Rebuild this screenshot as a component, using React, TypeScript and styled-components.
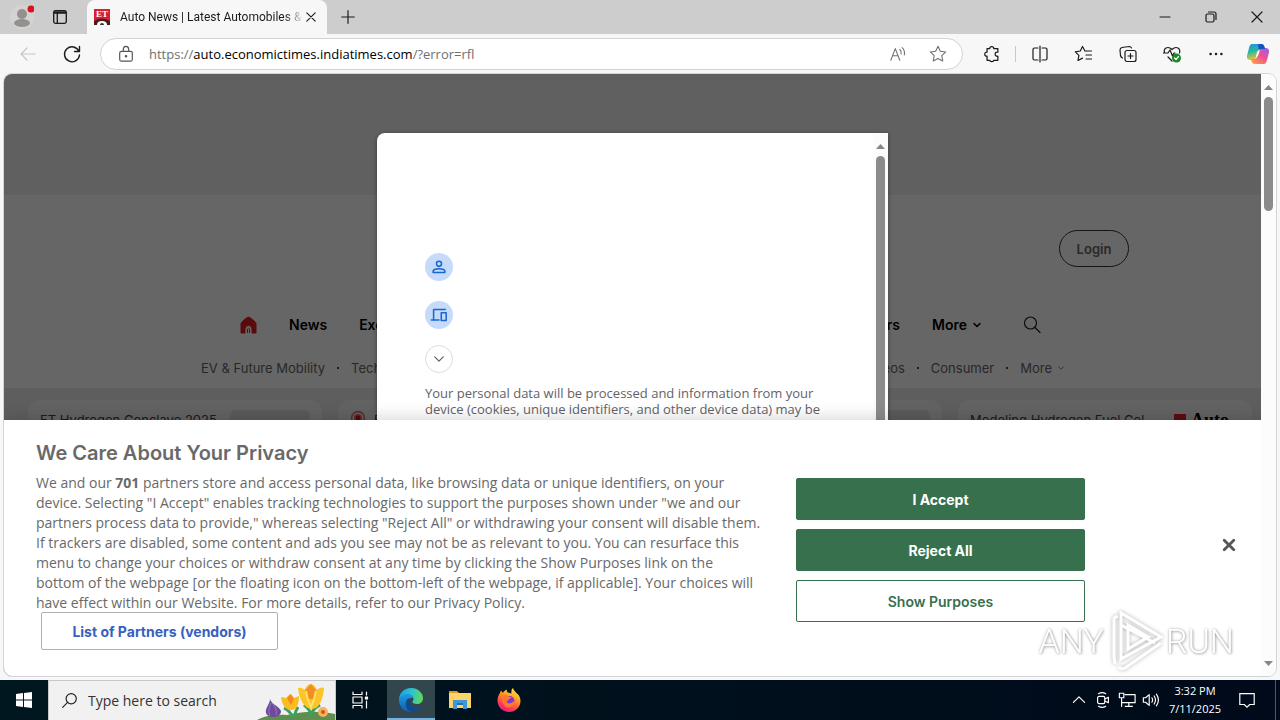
import React from 'react';
import styled, { createGlobalStyle } from 'styled-components';

const ui = `"Open Sans", "Noto Sans", sans-serif`;
const brand = `Inter, "Open Sans", sans-serif`;

const GlobalStyle = createGlobalStyle`
  * { box-sizing: border-box; }
  body { margin: 0; font-family: ${brand}; overflow: hidden; }
  button { font-family: inherit; padding: 0; border: 0; background: none; color: inherit; cursor: pointer; }
  p, h2, ul { margin: 0; padding: 0; }
  a { color: inherit; text-decoration: none; }
  svg { display: block; flex: none; }
`;

const Desktop = styled.div`
  height: 100vh;
  display: flex;
  flex-direction: column;
  background: #f5f7f8;
`;

/* Browser chrome */
const TitleBar = styled.header`
  height: 34px;
  flex: none;
  display: flex;
  background: #cdcdcd;
  font-family: ${ui};
`;
const TitleButton = styled.button<{ $w: number }>`
  width: ${p => p.$w}px;
  display: grid;
  place-items: center;
`;
const TitleLead = styled.div`
  display: flex;
  padding: 0 8px 0 3px;
`;
const Tab = styled.div`
  width: 240px;
  display: flex;
  align-items: center;
  padding: 0 8px 0 7px;
  background: #f7f7f7;
  border-radius: 8px 8px 0 0;
`;
const TabTitle = styled.span`
  flex: 1;
  margin-left: 10px;
  overflow: hidden;
  white-space: nowrap;
  font-family: Roboto, sans-serif;
  font-size: 12px;
  line-height: 20px;
  color: #1b1b1b;
  mask-image: linear-gradient(to right, #000 164px, transparent 184px);
`;
const TabClose = styled.button`
  width: 16px;
  height: 16px;
  display: grid;
  place-items: center;
`;
const WindowControls = styled.div`
  margin-left: auto;
  display: flex;
`;

const Toolbar = styled.div`
  height: 39px;
  flex: none;
  display: flex;
  align-items: center;
  padding: 0 2px 0 6px;
  background: #f7f7f7;
  font-family: ${ui};
`;
const ToolButton = styled.button<{ $w?: number }>`
  width: ${p => p.$w ?? 44}px;
  height: 32px;
  flex: none;
  display: grid;
  place-items: center;
`;
const AddressBar = styled.div`
  flex: 1;
  height: 32px;
  margin: 0 7px 0 6px;
  padding: 0 4px 0 16px;
  display: flex;
  align-items: center;
  gap: 14px;
  border: 1px solid #d2d2d2;
  border-radius: 16px;
  background: #fff;
`;
const Url = styled.div`
  flex: 1;
  font-size: 13px;
  line-height: 20px;
  color: #000;
`;
const Muted = styled.span`
  color: #707070;
`;
const AddressActions = styled.div`
  display: flex;
`;
const ToolDivider = styled.span`
  width: 1px;
  height: 16px;
  margin: 0 2px 0 1px;
  background: #c8c8c8;
`;

/* Page viewport */
const Frame = styled.main`
  flex: 1;
  min-height: 0;
  margin: 0 3px 3px;
  display: flex;
  overflow: hidden;
  border: 1px solid #d4d4d4;
  border-radius: 9px;
  background: #fff;
`;
const Viewport = styled.div`
  position: relative;
  flex: 1;
  overflow: hidden;
`;
const ScrollTrack = styled.div<{ $w: number }>`
  width: ${p => p.$w}px;
  flex: none;
  display: flex;
  flex-direction: column;
  align-items: center;
  padding: 10px 0 8px;
  gap: 5px;
  background: #fcfcfc;
`;
const ScrollThumb = styled.div<{ $share: string }>`
  width: 9px;
  height: ${p => p.$share};
  border-radius: 5px;
  background: #8b8b8b;
`;
const ScrollEnd = styled.div`
  margin-top: auto;
`;

const AdSlot = styled.div`
  height: 121px;
  background: #f0f0f0;
`;
const SiteHeader = styled.header`
  height: 193px;
  padding-top: 35px;
  background: #fff;
`;
const LoginRow = styled.div`
  display: flex;
  justify-content: flex-end;
  padding-right: 132px;
`;
const Login = styled.button`
  width: 70px;
  height: 37px;
  border: 1px solid #333;
  border-radius: 19px;
  font-size: 13px;
  font-weight: 600;
  color: #666;
`;
const NavRow = styled.nav`
  display: flex;
  justify-content: space-between;
  height: 24px;
  margin-top: 46px;
  padding: 0 219px 0 236px;
  font-size: 14px;
  line-height: 24px;
  font-weight: 600;
  color: #000;
`;
const NavGroup = styled.div<{ $gap: number }>`
  display: flex;
  align-items: center;
  gap: ${p => p.$gap}px;
`;
const NavLink = styled.a`
  display: flex;
  align-items: center;
  gap: 5px;
`;
const SearchLink = styled.a`
  margin-left: 8px;
`;
const SubNavRow = styled.nav`
  display: flex;
  justify-content: space-between;
  margin-top: 21px;
  padding: 0 196px 0 197px;
  font-size: 13px;
  line-height: 20px;
  color: #666;
`;
const Dot = styled.span`
  width: 2px;
  height: 2px;
  background: #444;
`;
const Cards = styled.section`
  display: grid;
  grid-template-columns: repeat(4, 1fr);
  gap: 16px;
  padding: 12px 9px 24px 24px;
  background: #ececec;
`;
const Card = styled.article`
  height: 72px;
  padding: 10px 12px;
  display: flex;
  justify-content: flex-end;
  gap: 8px;
  border-radius: 12px;
  background: #f7f7f7;
  font-size: 13px;
  line-height: 20px;
  color: #444;
`;
const CardTitle = styled.span`
  flex: 1;
  overflow: hidden;
  white-space: nowrap;
`;
const Thumb = styled.div`
  width: 80px;
  height: 48px;
  border-radius: 6px;
  background: #e4e4e4;
`;
const CardBrand = styled.div`
  width: 66px;
  display: flex;
  align-items: center;
  gap: 5px;
  height: 20px;
  font-family: "Liberation Serif", serif;
  font-size: 18px;
  font-weight: 700;
  color: #000;
`;
const BrandTile = styled.span`
  width: 12px;
  height: 12px;
  background: #e2202c;
`;

/* Overlays */
const Scrim = styled.div`
  position: absolute;
  inset: 0;
  display: flex;
  justify-content: center;
  align-items: flex-start;
  padding: 59px 0;
  background: rgba(0, 0, 0, 0.6);
`;
const Dialog = styled.section`
  width: 511px;
  height: 100%;
  display: flex;
  overflow: hidden;
  border-radius: 8px 0 0 8px;
  background: #fff;
  box-shadow: 0 1px 4px rgba(0, 0, 0, 0.4);
`;
const DialogBody = styled.div`
  flex: 1;
  display: flex;
  flex-direction: column;
  align-items: flex-start;
  padding: 120px 48px 0;
`;
const RoundIcon = styled.span`
  width: 28px;
  height: 28px;
  margin-bottom: 20px;
  display: grid;
  place-items: center;
  border-radius: 50%;
  background: #c6dafa;
`;
const Expand = styled.button`
  width: 28px;
  height: 28px;
  margin: -4px 0 12px;
  display: grid;
  place-items: center;
  border: 1px solid #dadce0;
  border-radius: 50%;
`;
const DialogText = styled.p`
  font-family: ${ui};
  font-size: 13px;
  line-height: 16px;
  color: #5f6368;
  white-space: nowrap;
`;

const Banner = styled.section`
  position: absolute;
  left: 0;
  right: 0;
  bottom: 0;
  display: grid;
  grid-template-columns: minmax(0, 728px) minmax(200px, 289px) 1fr;
  column-gap: 32px;
  padding: 20px 24px 26px 32px;
  background: #fff;
  box-shadow: 0 0 18px rgba(0, 0, 0, 0.2);
  color: #696969;
`;
const BannerTitle = styled.h2`
  font-size: 20px;
  line-height: 26px;
  font-weight: 600;
`;
const BannerText = styled.p`
  margin-top: 7px;
  font-family: ${ui};
  font-size: 14px;
  line-height: 20px;
  white-space: nowrap;
`;
const Vendors = styled.button`
  width: 237px;
  height: 38px;
  margin: -1px 0 0 5px;
  border: 1px solid #b0b0b0;
  border-radius: 2px;
  font-size: 14px;
  font-weight: 700;
  color: #3860be;
`;
const Choices = styled.div`
  display: flex;
  flex-direction: column;
  gap: 9px;
  padding-top: 38px;
`;
const Choice = styled.button<{ $outline?: boolean }>`
  height: 42px;
  border: 1px solid #36704c;
  border-radius: 2px;
  background: ${p => (p.$outline ? '#fff' : '#36704c')};
  color: ${p => (p.$outline ? '#36704c' : '#fff')};
  font-size: 14px;
  font-weight: ${p => (p.$outline ? 600 : 700)};
`;
const BannerClose = styled.button`
  justify-self: end;
  align-self: center;
  width: 16px;
  height: 16px;
`;
const Watermark = styled.div`
  position: absolute;
  right: 27px;
  bottom: 3px;
  display: flex;
  align-items: center;
  gap: 1px;
  font-family: Roboto, sans-serif;
  font-weight: 300;
  font-size: 34px;
  line-height: 64px;
  color: #fff;
  text-shadow: 0 0 3px rgba(0, 0, 0, 0.4), 1px 1px 3px rgba(0, 0, 0, 0.3);
  opacity: 0.8;
  pointer-events: none;
`;
const PlayIcon = styled.svg`
  filter: drop-shadow(0 0 2px rgba(0, 0, 0, 0.4));
`;

/* Taskbar */
const Taskbar = styled.footer`
  height: 40px;
  flex: none;
  display: flex;
  background: linear-gradient(to right, #00171f, #000a1a);
  color: #fff;
  font-family: ${ui};
`;
const TaskButton = styled.button<{ $w?: number; $active?: boolean }>`
  width: ${p => p.$w ?? 48}px;
  display: grid;
  place-items: center;
  background: ${p => (p.$active ? '#32464e' : 'transparent')};
  box-shadow: ${p => (p.$active ? 'inset 0 -2px #76b0e4' : 'none')};
`;
const SearchBox = styled.label`
  width: 288px;
  display: flex;
  align-items: center;
  padding-left: 12px;
  border: 1px solid #c8c8c8;
  border-bottom: 0;
  background: #f1f1f1;
`;
const SearchInput = styled.input`
  flex: 1;
  min-width: 0;
  height: 38px;
  padding: 0 0 0 10px;
  border: 0;
  background: none;
  outline: none;
  font-family: ${ui};
  font-size: 14px;
  color: #222;
  &::placeholder { color: #333; opacity: 1; }
`;
const Apps = styled.div`
  display: flex;
  gap: 1px;
  padding-left: 3px;
`;
const Tray = styled.div`
  margin-left: auto;
  display: flex;
`;
const Clock = styled.time`
  width: 64px;
  padding-top: 2px;
  text-align: center;
  font-size: 11px;
  line-height: 18px;
`;
const ShowDesktop = styled.span`
  width: 5px;
  margin-left: 8px;
  border-left: 1px solid #4d5862;
`;

type IconProps = { size?: number; color?: string; width?: number; children: React.ReactNode };
const Icon = ({ size = 20, color = '#1b1b1b', width = 1.2, children }: IconProps) => (
  <svg width={size} height={size} viewBox="0 0 20 20" fill="none" stroke={color} strokeWidth={width} strokeLinecap="round" strokeLinejoin="round" aria-hidden="true">
    {children}
  </svg>
);
const Arrow = ({ down }: { down?: boolean }) => (
  <svg width="9" height="8" viewBox="0 0 9 8" aria-hidden="true">
    <path d={down ? 'M0 1h9L4.500 6z' : 'M0 6h9L4.500 1z'} fill="#858585" />
  </svg>
);
const Chevron = ({ size = 10, width = 3, color = '#000' }) => (
  <Icon size={size} width={width} color={color}><path d="m4 7 6 6 6-6" /></Icon>
);

const Favicon = () => (
  <svg width="16" height="16" viewBox="0 0 16 16" aria-hidden="true">
    <path fill="#d91f2b" d="M0 0h16v16H0z" />
    <text x="8" y="8" textAnchor="middle" fontFamily="Liberation Serif" fontSize="9" fontWeight="700" fill="#fff">ET</text>
    <path d="M0 12q8-5 16 0v4H0z" fill="#4a1b22" />
    <path d="M3 16q0-4 5-4t5 4z" fill="#fff" />
    <circle cx="8" cy="16" r="2" fill="#333" />
  </svg>
);

const Copilot = () => (
  <svg width="22" height="20" viewBox="0 0 22 20" aria-hidden="true">
    <defs>
      <linearGradient id="cpA" x1="0" y1="0" x2=".3" y2="1">
        <stop stopColor="#1b8fe8" /><stop offset=".5" stopColor="#28b8a0" /><stop offset="1" stopColor="#f4c52d" />
      </linearGradient>
      <linearGradient id="cpB" x1="1" y1="0" x2=".2" y2="1">
        <stop stopColor="#9a5df0" /><stop offset=".5" stopColor="#ec4f96" /><stop offset="1" stopColor="#ff9b4a" />
      </linearGradient>
    </defs>
    <path d="M5 0h9c2 0 3 1 3.500 3l.5 2h-4c-2 0-2.800 1-3.300 3L9 13c-.6 2-1.500 3-3.500 3H3c-2.500 0-3.600-2-2.800-5L2 4C2.700 1.300 3.500 0 5 0z" fill="url(#cpA)" />
    <path d="M17 20H8c-2 0-3-1-3.500-3L4 15h3c2 0 3-1 3.500-3L12 7c.6-2 1.500-3 3.500-3H19c2.500 0 3.600 2 2.800 5L20 16c-.7 2.700-1.500 4-3 4z" fill="url(#cpB)" />
    <path d="M11 0h3c2 0 3 1 3.500 3l.5 2h-4c-1 0-1.800.3-2.300 1z" fill="#1950c5" />
    <path d="m10 8 3-2-2 6-2 1z" fill="#f7f7f7" />
  </svg>
);

const EdgeLogo = () => (
  <svg width="24" height="24" viewBox="0 0 24 24" aria-hidden="true">
    <defs>
      <linearGradient id="edA" x1="0" y1=".4" x2="1" y2=".5">
        <stop stopColor="#1e9fe6" /><stop offset=".5" stopColor="#2cc3d2" /><stop offset="1" stopColor="#62d957" />
      </linearGradient>
      <linearGradient id="edB" x1="0" y1="0" x2="0" y2="1">
        <stop stopColor="#1b9de2" /><stop offset="1" stopColor="#1459b0" />
      </linearGradient>
    </defs>
    <path d="M0 12C0 5 5 0 12 0s12 5 12 10c0 4-3 6-6 6-3.500 0-5-1.500-4.500-2.500.5-.8 1-1.500 1-2.500 0-2.500-2.500-4-5.500-4-4 0-8 2-9 5z" fill="url(#edA)" />
    <path d="M0 12c.5-3.500 4-6 8.500-6 3.500 0 6 2 6 4.500C10.500 9 8 12 8 14.500c0 4.500 4 7.500 8.500 7.500-1.400 1.300-3 2-5 2C5 24 0 19 0 12z" fill="url(#edB)" />
    <path d="M9.500 10.200C6 12 5 20 11 23.500c4.500 1 8.500-1 11.200-4.500.5-.6 0-1-.7-.7-6 2.700-12.500-1.300-12-8.100z" fill="#114a8b" />
  </svg>
);

const Firefox = () => (
  <svg width="24" height="24" viewBox="0 0 24 24" aria-hidden="true">
    <defs>
      <linearGradient id="ffA" x1=".8" y1="0" x2=".3" y2="1">
        <stop stopColor="#fff04a" /><stop offset=".4" stopColor="#ff9a1f" /><stop offset=".75" stopColor="#ff3d55" /><stop offset="1" stopColor="#e31587" />
      </linearGradient>
    </defs>
    <path d="M3 5c0-1 .6-2 1.200-2.600C4.500 3.500 5 4 6 4.700 7 3 8.500 2 10 1.800 9.500 3 10 4 11 4.500l3.500 1C14 3.500 14.500 1 16 0c.4 2.500 3 4.300 4.500 6C22 7 23.500 10 23.500 13 23.500 19 18.500 24 12 24S.5 19 .5 12.500C.5 9.500 1.500 7 3 5z" fill="url(#ffA)" />
    <circle cx="12.500" cy="13" r="5" fill="#8238d6" />
    <path d="M6 7.500c2-.8 4-.3 5.500.8 1 .7 2.500.7 3 1-.3 1.200-2.500 1.500-3 2.200-.4.800-.6 1.500-2 1.600.2 2 2 2.600 4 2.200 2-.5 3-2 3.700-2.800 1 4-2 7-5.700 7C7 19.500 3.500 13 6 7.500z" fill="#ff7a28" />
  </svg>
);

const Explorer = () => (
  <svg width="22" height="20" viewBox="0 0 22 20" aria-hidden="true">
    <path d="M0 1h8l2 2H0z" fill="#e8961e" />
    <path d="M0 3h22v15H0z" fill="#fcd568" />
    <path d="M4 10h14v9h-4v-4H8v4H4z" fill="#3f96d8" />
    <path d="M8 13h6v2H8z" fill="#2b6fae" />
  </svg>
);

const Flowers = () => (
  <svg width="78" height="38" viewBox="0 0 78 38" aria-hidden="true">
    <path d="M0 38c8-5 20-6 30-5 12-3 30-5 48-1v6z" fill="#5f8f4f" />
    <path d="M36 36c-2-6-5-8-9-10M37 36c1-6 2-8 4-11M54 34c0-6-4-8-7-11M54 34c1-6 4-8 9-11" stroke="#3fa05c" strokeWidth="3" fill="none" />
    <path d="M13 17c1 5 9 7 11 12 0 4-4 6-8 6-5 0-8-3-7-7 1-4 4-7 4-11z" fill="#6d4a9c" />
    <path d="M14 21c-2 5-3 9-1 13M15 21c4 4 5 8 4 12" stroke="#9877c4" fill="none" />
    <path d="M24 15l5 1 4-4 4 4 5-2c0 8-2 14-8 14s-9-6-10-13z" fill="#f8bd22" />
    <path d="m30 16 4-4 3 5-3 6z" fill="#f08a1c" />
    <path d="M41 6c3-1 5 1 7 2 1-4 4-6 6-6s4 2 6 6c2-2 4-3 7-2-1 12-5 21-12 21S42 18 41 6z" fill="#fbc527" />
    <path d="m48 8 6-6 6 7-2 8h-8z" fill="#f0911f" />
    <path d="M49 9c1 6 2 11 5 16 3-6 4-10 5-16" stroke="#ffe169" strokeWidth="2" fill="none" />
    <circle cx="66" cy="30" r="5" fill="#f9b25b" /><circle cx="66" cy="30" r="2" fill="#c35a1e" />
  </svg>
);

const PlayMark = () => (
  <PlayIcon width="60" height="64" viewBox="0 0 60 64" fill="none" stroke="#fff" strokeWidth="3" aria-hidden="true">
    <path d="M9 48V11q0-4 4-3M9 48l1 7" />
    <path d="M16 4v46l40-22zM23 16v24l20-12zM16 16l34 18M14 58q2 3 6 1l36-25" />
  </PlayIcon>
);

export default function App() {
  return (
    <Desktop>
      <GlobalStyle />
      <TitleBar>
        <TitleLead>
          <TitleButton $w={38} aria-label="Profile">
            <svg width="24" height="24" viewBox="0 0 24 24">
              <circle cx="12" cy="12" r="12" fill="#d5d3d2" />
              <circle cx="12" cy="9" r="5" fill="#93908e" />
              <ellipse cx="12" cy="18" rx="8" ry="4" fill="#93908e" />
              <circle cx="21" cy="4" r="3.500" fill="#d9121f" />
            </svg>
          </TitleButton>
          <TitleButton $w={38} aria-label="Tab actions">
            <Icon size={18} width={1.5}><rect x="3" y="3" width="14" height="14" rx="2" /><path d="M4 5h12" strokeWidth="2.500" /><path d="M7 6v11" /></Icon>
          </TitleButton>
        </TitleLead>
        <Tab>
          <Favicon />
          <TabTitle>Auto News | Latest Automobiles &amp;</TabTitle>
          <TabClose aria-label="Close tab"><Icon size={14} width={1.6}><path d="m4 4 12 12M16 4 4 16" /></Icon></TabClose>
        </Tab>
        <TitleButton $w={42} aria-label="New tab"><Icon size={18} width={1.3}><path d="M10 3v14M3 10h14" /></Icon></TitleButton>
        <WindowControls>
          <TitleButton $w={46} aria-label="Minimize"><Icon size={20}><path d="M5 10h10" /></Icon></TitleButton>
          <TitleButton $w={46} aria-label="Restore"><Icon size={20}><rect x="5" y="7" width="8" height="8" rx="1.500" /><path d="M7.500 5H13q2 0 2 2v5.500" /></Icon></TitleButton>
          <TitleButton $w={46} aria-label="Close"><Icon size={20}><path d="m5 5 10 10M15 5 5 15" /></Icon></TitleButton>
        </WindowControls>
      </TitleBar>

      <Toolbar>
        <ToolButton aria-label="Back"><Icon color="#c6c6c6"><path d="M17 10H3M9 4l-6 6 6 6" /></Icon></ToolButton>
        <ToolButton aria-label="Refresh"><Icon width={1.4}><path d="M17 7.500A7.500 7.500 0 1 0 17.500 11M17.500 2.500v5h-5" /></Icon></ToolButton>
        <AddressBar>
          <Icon size={18} color="#555" width={1.3}><rect x="3" y="7" width="14" height="11" rx="2" /><path d="M7 7V5q0-3.500 3-3.500T13 5v2" /><circle cx="10" cy="12.500" r=".8" fill="#555" /></Icon>
          <Url><Muted>https://</Muted>auto.economictimes.indiatimes.com<Muted>/?error=rfl</Muted></Url>
          <AddressActions>
            <ToolButton $w={40} aria-label="Read aloud"><Icon size={18} color="#707070"><path d="M2 17 7 4l5 13M4 12h6M12 5q2 2 1.500 5M14.500 3q3.500 3 2.500 8" /></Icon></ToolButton>
            <ToolButton $w={40} aria-label="Add to favorites"><Icon size={18} color="#707070"><path d="m10 1.500 2.600 5.400 6 .8-4.400 4.100 1.100 6-5.300-2.900-5.300 2.900 1.100-6L1.400 7.700l6-.8z" /></Icon></ToolButton>
          </AddressActions>
        </AddressBar>
        <ToolButton aria-label="Extensions"><Icon size={18} width={1.4}><path d="M4.500 4h3q0-2.200 2.200-2.200T12 4h4.500v4q-3-.3-3 2.200t3 2.300V17H12q0 1.500-2.200 1.500T7.500 17h-3v-4.500Q2 12.500 2 10.200T4.500 8z" /></Icon></ToolButton>
        <ToolDivider />
        <ToolButton aria-label="Split screen"><Icon><path d="M8 4H4.500Q3 4 3 5.500v9Q3 16 4.500 16H8M12 4h3.500Q17 4 17 5.500v9q0 1.500-1.500 1.500H12M10 2v16" /></Icon></ToolButton>
        <ToolButton aria-label="Favorites"><Icon><path d="M11 7 8.500 2.500 6.300 7l-5 .8 3.600 3.600L4 16.500l4.500-2.400M11 7h6.500M12 11h5.500M12 15h5.500" /></Icon></ToolButton>
        <ToolButton aria-label="Collections"><Icon><rect x="7" y="6.500" width="11" height="11" rx="2" /><path d="M12.500 9.500v5M10 12h5M4.500 14q-1.500-.5-2-2.500L2 6q0-2 2-2.500l7-1q2 0 2.500 1.500" /></Icon></ToolButton>
        <ToolButton aria-label="Browser essentials">
          <Icon><path d="m10 17-4-4M2.500 9q-1-3.500 1.500-5 3-1.500 6 1.500 3-3 6-1.500 2.500 1.500 1.500 5M1.500 9H6l2-3 2.500 6L12 9h1" /><circle cx="14.500" cy="14" r="4.500" fill="#1a8a24" stroke="none" /><path d="m12.500 14 1.500 1.500 2.500-3" stroke="#fff" /></Icon>
        </ToolButton>
        <ToolButton aria-label="Settings and more"><Icon size={18}><g fill="#1b1b1b" stroke="none"><circle cx="4" cy="10" r="1.400" /><circle cx="10" cy="10" r="1.400" /><circle cx="16" cy="10" r="1.400" /></g></Icon></ToolButton>
        <ToolButton $w={40} aria-label="Copilot"><Copilot /></ToolButton>
      </Toolbar>

      <Frame>
        <Viewport>
          <AdSlot />
          <SiteHeader>
            <LoginRow><Login>Login</Login></LoginRow>
            <NavRow>
              <NavGroup $gap={32}>
                <NavLink href="#home" aria-label="Home">
                  <svg width="17" height="18" viewBox="0 0 17 18"><path d="M8.500 1C6 2 2 5 1 7.500V17h4v-4q0-3.500 3.500-3.500T12 13v4h4V7.500C15 5 11 2 8.500 1z" fill="#e21b22" stroke="#e21b22" strokeLinejoin="round" /><path d="M7.500 17v-4q1-1.500 2 0v4" fill="none" stroke="#e21b22" /></svg>
                </NavLink>
                <NavLink href="#news">News</NavLink>
                <NavLink href="#exclusives">Exclusives</NavLink>
              </NavGroup>
              <NavGroup $gap={32}>
                <NavLink href="#newsletters">Newsletters</NavLink>
                <NavLink href="#more">More <Chevron /></NavLink>
                <SearchLink href="#search" aria-label="Search"><Icon size={20} color="#222" width={1.2}><circle cx="8.500" cy="8" r="6" /><path d="m13 12.500 5 5" /></Icon></SearchLink>
              </NavGroup>
            </NavRow>
            <SubNavRow>
              <NavGroup $gap={12}>
                <a href="#ev">EV &amp; Future Mobility</a><Dot /><a href="#technology">Technology</a>
              </NavGroup>
              <NavGroup $gap={12}>
                <a href="#videos">Videos</a><Dot /><a href="#consumer">Consumer</a><Dot />
                <NavLink href="#topics">More <Chevron size={8} width={2} color="#666" /></NavLink>
              </NavGroup>
            </SubNavRow>
          </SiteHeader>
          <Cards>
            <Card><CardTitle>ET Hydrogen Conclave 2025</CardTitle><Thumb /></Card>
            <Card>
              <Icon size={16} color="#e07070" width={2}><circle cx="10" cy="10" r="8" /><circle cx="10" cy="10" r="4" fill="#e01010" /></Icon>
              <CardTitle>E</CardTitle><Thumb />
            </Card>
            <Card><Thumb /></Card>
            <Card><CardTitle>Modeling Hydrogen Fuel Cel</CardTitle><CardBrand><BrandTile />Auto</CardBrand></Card>
          </Cards>

          <Scrim>
            <Dialog role="dialog" aria-label="Consent">
              <DialogBody>
                <RoundIcon><Icon size={18} color="#1967d2" width={1.7}><circle cx="10" cy="6.500" r="2.800" /><path d="M3.500 16v-1.500Q4 12 10 12t6.500 2.500V16z" /></Icon></RoundIcon>
                <RoundIcon><Icon size={18} color="#1967d2" width={1.7}><path d="M17 4H4v11M1.500 15.500H10" /><rect x="12.500" y="7.500" width="5.500" height="8.500" /></Icon></RoundIcon>
                <Expand aria-label="Learn more"><Chevron size={14} width={1.8} color="#5f6368" /></Expand>
                <DialogText>
                  Your personal data will be processed and information from your<br />
                  device (cookies, unique identifiers, and other device data) may be
                </DialogText>
              </DialogBody>
              <ScrollTrack $w={15}><Arrow /><ScrollThumb $share="80%" /></ScrollTrack>
            </Dialog>
          </Scrim>

          <Banner aria-label="Privacy">
            <div>
              <BannerTitle>We Care About Your Privacy</BannerTitle>
              <BannerText>
                We and our <b>701</b> partners store and access personal data, like browsing data or unique identifiers, on your<br />
                device. Selecting "I Accept" enables tracking technologies to support the purposes shown under "we and our<br />
                partners process data to provide," whereas selecting "Reject All" or withdrawing your consent will disable them.<br />
                If trackers are disabled, some content and ads you see may not be as relevant to you. You can resurface this<br />
                menu to change your choices or withdraw consent at any time by clicking the Show Purposes link on the<br />
                bottom of the webpage [or the floating icon on the bottom-left of the webpage, if applicable]. Your choices will<br />
                have effect within our Website. For more details, refer to our Privacy Policy.
              </BannerText>
              <Vendors>List of Partners (vendors)</Vendors>
            </div>
            <Choices>
              <Choice>I Accept</Choice>
              <Choice>Reject All</Choice>
              <Choice $outline>Show Purposes</Choice>
            </Choices>
            <BannerClose aria-label="Close"><Icon size={16} color="#555" width={3.5}><path d="m4 4 12 12M16 4 4 16" /></Icon></BannerClose>
          </Banner>
          <Watermark><span>ANY</span><PlayMark /><span>RUN</span></Watermark>
        </Viewport>
        <ScrollTrack $w={15}>
          <Arrow /><ScrollThumb $share="114px" /><ScrollEnd><Arrow down /></ScrollEnd>
        </ScrollTrack>
      </Frame>

      <Taskbar>
        <TaskButton aria-label="Start">
          <svg width="16" height="16" viewBox="0 0 16 16" fill="#fff"><path d="m0 2 7-1v6.500H0zM8 1l8-1v7.500H8zM0 8.500h7V15l-7-1zM8 8.500h8V16l-8-1z" /></svg>
        </TaskButton>
        <SearchBox>
          <Icon size={17} color="#222" width={1.4}><circle cx="12" cy="8" r="6" /><path d="m8 12-6 6" /></Icon>
          <SearchInput placeholder="Type here to search" aria-label="Type here to search" />
          <Flowers />
        </SearchBox>
        <TaskButton aria-label="Task view">
          <Icon size={20} color="#fff" width={1.2}><path d="M3 2v2.500h9V2M3 18v-2.500h9V18M3 7h9v6H3zM16.500 2v3M16.500 11v7" /><path d="M15.500 7h2v2h-2z" fill="#fff" /></Icon>
        </TaskButton>
        <Apps>
          <TaskButton $active aria-label="Microsoft Edge"><EdgeLogo /></TaskButton>
          <TaskButton aria-label="File Explorer"><Explorer /></TaskButton>
          <TaskButton aria-label="Firefox"><Firefox /></TaskButton>
        </Apps>
        <Tray>
          <TaskButton $w={24} aria-label="Show hidden icons"><Icon size={16} color="#fff" width={1.5}><path d="m3 13 7-7 7 7" /></Icon></TaskButton>
          <TaskButton $w={24} aria-label="Meet now"><Icon size={18} color="#fff" width={1.3}><rect x="4" y="6" width="8" height="8" rx="1.500" /><path d="m12 9 4-2v6l-4-2M5 3q4-2.500 8 0M5 17q4 2.500 8 0" /></Icon></TaskButton>
          <TaskButton $w={24} aria-label="Network"><Icon size={18} color="#fff" width={1.3}><path d="M8 4h11v9H5M12 13v4M8 17h8M1.500 2.500h5v5h-5zM4 8v9" /></Icon></TaskButton>
          <TaskButton $w={24} aria-label="Volume"><Icon size={18} color="#fff" width={1.3}><path d="M1.500 7.500H4L8 4v12l-4-3.500H1.500zM11 7.500q1.500 2.500 0 5M13.500 5.500q3 4.500 0 9M16 3.500q4.500 6.500 0 13" /></Icon></TaskButton>
          <Clock>3:32 PM<br />7/11/2025</Clock>
          <TaskButton $w={40} aria-label="Notifications"><Icon size={18} color="#fff" width={1.3}><path d="M2 3h16v12h-5l-3 3-3-3H2z" strokeLinejoin="miter" /></Icon></TaskButton>
          <ShowDesktop />
        </Tray>
      </Taskbar>
    </Desktop>
  );
}
